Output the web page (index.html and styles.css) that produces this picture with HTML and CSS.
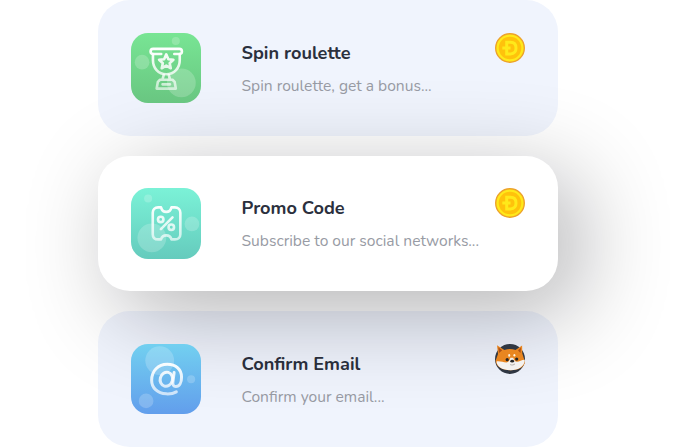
FILE: index.html
```
<!DOCTYPE html>
<html lang="en">
<head>
<meta charset="utf-8">
<title>Bonus tasks</title>
<link rel="stylesheet" href="styles.css">
</head>
<body>
<svg class="defs" width="0" height="0" aria-hidden="true">
  <defs>
    <linearGradient id="glyph" gradientUnits="userSpaceOnUse" x1="0" y1="15" x2="0" y2="55">
      <stop offset="0" stop-color="#fff"/><stop offset="1" stop-color="#fff" stop-opacity=".62"/>
    </linearGradient>
    <clipPath id="disc"><path d="M-3-3H33V15A15 15 0 0 1 0 15H-3Z"/></clipPath>
    <symbol id="doge" viewBox="0 0 30 30">
      <circle cx="15" cy="15" r="14.3" fill="#ffe91a" stroke="#eda22b" stroke-width="1.4"/>
      <circle cx="15" cy="15" r="11.3" fill="#ffc20c"/>
      <path d="M11.7 9.3H15.5C19.1 9.3 21 11.6 21 15.1S19.1 20.9 15.5 20.9H11.7ZM7.3 15.1H15.5" fill="none" stroke="#ffe91a" stroke-width="3"/>
    </symbol>
  </defs>
</svg>
<main class="tasks">
  <article class="card">
    <svg class="tile tile-green" viewBox="0 0 70 70">
      <g fill="#fff" fill-opacity=".2"><circle cx="44.5" cy="8" r="4"/><circle cx="11" cy="29" r="7.3"/><circle cx="50" cy="49.5" r="14.3"/></g>
      <g fill="none" stroke="url(#glyph)" stroke-width="2.6" stroke-linecap="round" stroke-linejoin="round">
        <path d="M30 20.8H22C18.6 20.8 18.6 15.8 22 15.8H48C51.4 15.8 51.4 20.8 48 20.8H43"/>
        <path d="M21.8 21V27C21.8 34.5 27 41 35 41S48.4 34.5 48.4 27V21"/>
        <path d="M35 21.2L37.1 26L42.1 26.5L38.4 30L39.5 35L35 32.4L30.5 35L31.6 30L27.9 26.5L32.9 26Z"/>
        <path d="M32.5 41.5L31.3 46M37.5 41.5L38.7 46M28.8 46.4H41.2L43.3 48.5L44.5 55.2H25.5L26.7 48.5ZM31.3 51H38.7"/>
      </g>
    </svg>
    <div class="copy">
      <h2 class="title">Spin roulette</h2>
      <p class="text">Spin roulette, get a bonus...</p>
    </div>
    <svg class="coin" viewBox="0 0 30 30"><use href="#doge"/></svg>
  </article>

  <article class="card card-active">
    <svg class="tile tile-mint" viewBox="0 0 70 70">
      <g fill="#fff" fill-opacity=".2"><circle cx="17" cy="10.5" r="4"/><circle cx="60.5" cy="35.7" r="7.3"/><circle cx="20.7" cy="49.5" r="14.3"/></g>
      <g fill="none" stroke="url(#glyph)" stroke-width="2.6" stroke-linecap="round" stroke-linejoin="round">
        <path d="M27 19.2H29.8C30.5 22.1 32.3 23.7 35 23.7S39.5 22.1 40.2 19.2H43.5C46.8 19.2 49 21.5 49 24.5V45.8C49 49 46.8 51 43.5 51H40.2C39.5 48.5 37.7 47 35 47S30.5 48.5 29.8 51H27C23.6 51 21.6 49 21.6 45.8V24.5C21.6 21.5 23.6 19.2 27 19.2Z"/>
        <path d="M41.2 29.2L29.7 40.8"/><circle cx="29.5" cy="31.2" r="2.7"/><circle cx="40" cy="39" r="2.7"/>
      </g>
    </svg>
    <div class="copy">
      <h2 class="title">Promo Code</h2>
      <p class="text">Subscribe to our social networks...</p>
    </div>
    <svg class="coin" viewBox="0 0 30 30"><use href="#doge"/></svg>
  </article>

  <article class="card">
    <svg class="tile tile-blue" viewBox="0 0 70 70">
      <g fill="#fff" fill-opacity=".2"><circle cx="28.5" cy="16.5" r="14.3"/><circle cx="59.7" cy="35" r="4"/><circle cx="15" cy="56.5" r="7.3"/></g>
      <g fill="none" stroke="url(#glyph)" stroke-width="3" stroke-linecap="round" stroke-linejoin="round">
        <path d="M45 47.5C42 49.2 38.5 49.7 35 49.5C26 49 20.5 43.5 20.5 36C20.5 26.5 27 20.2 36 20.2C44.7 20.2 50.2 25.3 50.2 33C50.2 38.5 48 42.2 44.6 42.2C42.1 42.2 41.2 40.5 41.6 37.8L42.8 28.4"/>
        <ellipse cx="35.1" cy="35" rx="6.1" ry="7.1" transform="rotate(16 35.1 35)"/>
      </g>
    </svg>
    <div class="copy">
      <h2 class="title">Confirm Email</h2>
      <p class="text">Confirm your email...</p>
    </div>
    <svg class="coin" viewBox="0 0 30 30">
      <circle cx="15" cy="15" r="15" fill="#303742"/>
      <g clip-path="url(#disc)">
        <path d="M2 1.3L9.4 6C13 4.5 17 4.5 20.5 6L27.1 1.5L27.3 9.5L30 18C29 24 22 26.4 15 26.2C7 26.2 1.5 23 .5 17L3 10Z" fill="#e98620"/>
        <path d="M3.3 3.3L7.2 6.3L4 9ZM26 3.4L23 6.5L25.5 9Z" fill="#a94f17"/>
        <path d="M1.5 17.5C5 16.8 8 18.5 11.5 18.5C13.8 18 14.8 16 15.4 13.8H18.2C18.8 16 20 17.8 22 17.8C24.5 17.8 26.5 15.8 29.8 15.8C29.8 23 22.5 26.5 15 26.2C8 26.2 2 23 1.5 17.5Z" fill="#f4f2ef"/>
      </g>
      <g fill="#fff3df"><ellipse cx="14.2" cy="11.4" rx="1" ry="1.3"/><ellipse cx="19.4" cy="11.2" rx="1" ry="1.3"/></g>
      <g fill="#252525"><circle cx="12.2" cy="15.7" r="1.6"/><circle cx="21.7" cy="15.1" r="1.6"/><ellipse cx="17.2" cy="17.2" rx="1.9" ry="1.4"/></g>
      <path d="M15.2 20.6C17 21.4 18.8 21 20 19.8" fill="none" stroke="#99918c" stroke-width=".7"/>
    </svg>
  </article>
</main>
</body>
</html>
```

FILE: styles.css
```
* { box-sizing: border-box; }

body {
  margin: 0;
  height: 447px;
  overflow: hidden;
  background: #fff;
  font-family: Nunito, Lato, "Open Sans", sans-serif;
}

.defs { display: block; }

.tasks {
  display: grid;
  gap: 20px;
  width: 460px;
  margin-left: 98px;
}

.card {
  display: flex;
  align-items: flex-start;
  height: 135.7px;
  padding: 32.5px;
  border-radius: 32px;
  background: #f0f4fd;
}

.card-active {
  position: relative;
  z-index: 1;
  background: #fff;
  box-shadow: 20px 21px 92px rgba(5, 8, 14, .31);
}

.tile {
  position: relative;
  z-index: 2;
  flex: none;
  width: 70.5px;
  height: 70.5px;
  border-radius: 17px;
}

.tile-green { background: linear-gradient(#78e594, #69c681); }
.tile-mint { background: linear-gradient(#7bf2d7, #65cbbd); }
.tile-blue { background: linear-gradient(#72d0f0, #629eec); }

.copy {
  flex: 1;
  margin-left: 40.5px;
  padding-top: 8px;
  white-space: nowrap;
}

.title {
  margin: 0;
  color: #2b303d;
  font-size: 18.15px;
  font-weight: 700;
  line-height: 24px;
}

.text {
  margin: 11px 0 0;
  color: #989ba4;
  font-size: 15.6px;
  line-height: 20px;
}

.coin {
  position: relative;
  z-index: 2;
  flex: none;
  width: 30px;
  height: 30px;
  margin-right: .5px;
  overflow: visible;
}
```
